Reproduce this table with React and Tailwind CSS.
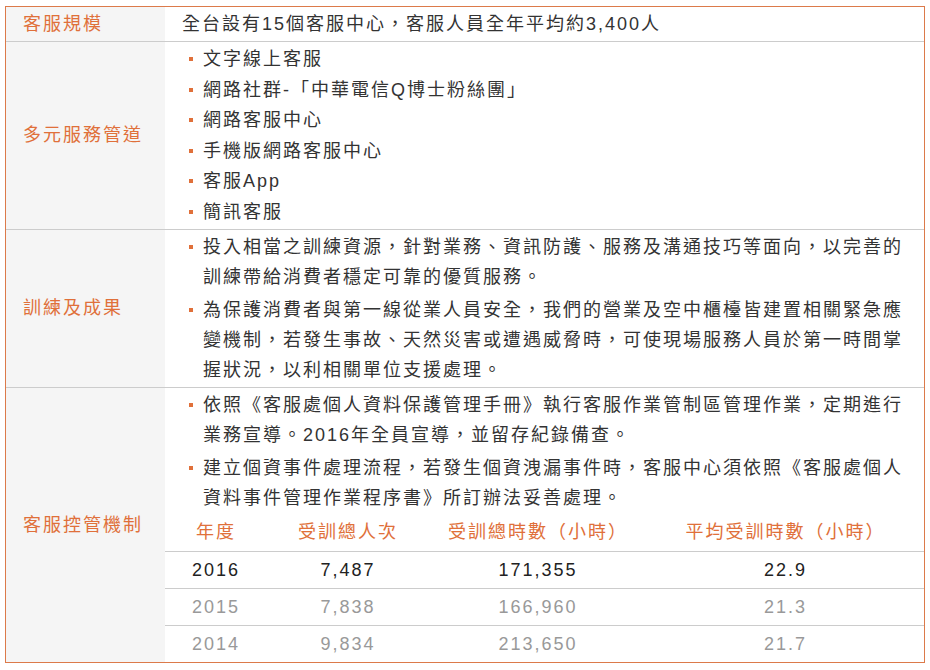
import React from 'react';

const font = { fontFamily: '"Liberation Sans", "Noto Sans CJK TC", sans-serif' };

const Bullet = () => (
  <span className="flex h-[30px] w-[14px] shrink-0 items-center">
    <span className="block h-[4px] w-[4px] bg-[#e0703a]" />
  </span>
);

const List = ({ items, gap = 'mb-[3px]', leading = 'leading-[30px]' }) => (
  <ul className="pl-[24px] pr-[12px]">
    {items.map((t, i) => (
      <li key={i} className={`flex ${i < items.length - 1 ? gap : ''}`}>
        <Bullet />
        <span className={`${leading} min-w-0 flex-1`}>{t}</span>
      </li>
    ))}
  </ul>
);

const Row = ({ label, children, last }) => (
  <div className={`grid grid-cols-[159px_1fr] ${last ? '' : 'border-b border-[#cccccc]'}`}>
    <div className="flex items-center bg-[#f5f5f5] pl-[17px] text-[#e0703a]">{label}</div>
    <div className="bg-white">{children}</div>
  </div>
);

const stats = [
  { y: '2016', p: '7,487', h: '171,355', a: '22.9', dark: true },
  { y: '2015', p: '7,838', h: '166,960', a: '21.3' },
  { y: '2014', p: '9,834', h: '213,650', a: '21.7' },
];

const cols = 'grid grid-cols-[102px_162px_218px_1fr]';

export default function App() {
  return (
    <div className="min-h-screen bg-white pl-[5px] pt-[6px]" style={font}>
      <div className="w-[920px] border border-[#dc7a4a] text-[18px] tracking-[2px] text-[#333333]">
        <Row label="客服規模">
          <div className="py-[2px] pl-[17px] leading-[30px]">全台設有15個客服中心，客服人員全年平均約3,400人</div>
        </Row>

        <Row label="多元服務管道">
          <div className="py-[2px]">
            <List
              gap=""
              leading="leading-[30.5px]"
              items={['文字線上客服', '網路社群-「中華電信Q博士粉絲團」', '網路客服中心', '手機版網路客服中心', '客服App', '簡訊客服']}
            />
          </div>
        </Row>

        <Row label="訓練及成果">
          <div className="py-[2px]">
            <List
              items={[
                '投入相當之訓練資源，針對業務、資訊防護、服務及溝通技巧等面向，以完善的訓練帶給消費者穩定可靠的優質服務。',
                '為保護消費者與第一線從業人員安全，我們的營業及空中櫃檯皆建置相關緊急應變機制，若發生事故、天然災害或遭遇威脅時，可使現場服務人員於第一時間掌握狀況，以利相關單位支援處理。',
              ]}
            />
          </div>
        </Row>

        <Row label="客服控管機制" last>
          <div className="pt-[2px]">
            <List
              items={[
                '依照《客服處個人資料保護管理手冊》執行客服作業管制區管理作業，定期進行業務宣導。2016年全員宣導，並留存紀錄備查。',
                '建立個資事件處理流程，若發生個資洩漏事件時，客服中心須依照《客服處個人資料事件管理作業程序書》所訂辦法妥善處理。',
              ]}
            />
            <div className={`${cols} h-[38px] items-center text-center text-[#e0703a]`}>
              <div>年度</div>
              <div>受訓總人次</div>
              <div>受訓總時數（小時）</div>
              <div>平均受訓時數（小時）</div>
            </div>
            {stats.map((r) => (
              <div
                key={r.y}
                className={`${cols} h-[37px] items-center border-t border-[#cccccc] text-center ${r.dark ? 'text-[#222222]' : 'text-[#999999]'}`}
              >
                <div>{r.y}</div>
                <div>{r.p}</div>
                <div>{r.h}</div>
                <div>{r.a}</div>
              </div>
            ))}
          </div>
        </Row>
      </div>
    </div>
  );
}
